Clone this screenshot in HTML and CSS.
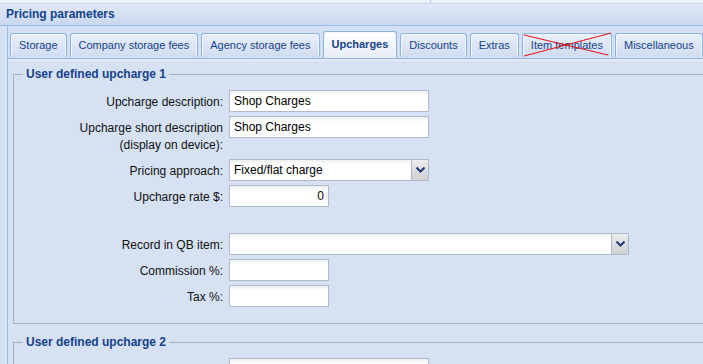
FILE: index.html
```html
<!DOCTYPE html>
<html lang="en">
<head>
  <meta charset="UTF-8" />
  <title>Pricing parameters</title>
  <link rel="stylesheet" href="styles.css">
</head>
<body>
  <div class="panel">
    <div class="top-strip"><span class="top-divider"></span></div>
    <div class="panel-header">Pricing parameters</div>

    <div class="panel-body">
      <ul class="tabs">
        <li class="tab">Storage</li>
        <li class="tab">Company storage fees</li>
        <li class="tab">Agency storage fees</li>
        <li class="tab active">Upcharges</li>
        <li class="tab">Discounts</li>
        <li class="tab">Extras</li>
        <li class="tab crossed">Item templates
          <svg class="cross" viewBox="0 0 94 24" preserveAspectRatio="none">
            <line x1="1" y1="1" x2="91" y2="22" />
            <line x1="1" y1="23" x2="94" y2="-1" />
          </svg>
        </li>
        <li class="tab">Miscellaneous</li>
      </ul>

      <div class="tab-body">
        <fieldset class="group">
          <legend>User defined upcharge 1</legend>
          <div class="form-row">
            <label>Upcharge description:</label>
            <div class="field wide">Shop Charges</div>
          </div>
          <div class="form-row">
            <label>Upcharge short description<br>(display on device):</label>
            <div class="field wide">Shop Charges</div>
          </div>
          <div class="form-row">
            <label>Pricing approach:</label>
            <div class="field wide combo">Fixed/flat charge<span class="trigger"><svg viewBox="0 0 9 6"><path d="M0.5 0.5 L4.5 4.5 L8.5 0.5" /></svg></span></div>
          </div>
          <div class="form-row">
            <label>Upcharge rate $:</label>
            <div class="field short number">0</div>
          </div>
          <div class="spacer"></div>
          <div class="form-row">
            <label>Record in QB item:</label>
            <div class="field huge combo"><span class="trigger"><svg viewBox="0 0 9 6"><path d="M0.5 0.5 L4.5 4.5 L8.5 0.5" /></svg></span></div>
          </div>
          <div class="form-row">
            <label>Commission %:</label>
            <div class="field short"></div>
          </div>
          <div class="form-row">
            <label>Tax %:</label>
            <div class="field short"></div>
          </div>
        </fieldset>

        <fieldset class="group">
          <legend>User defined upcharge 2</legend>
          <div class="form-row">
            <label>Upcharge description:</label>
            <div class="field wide"></div>
          </div>
        </fieldset>
      </div>
    </div>
  </div>
</body>
</html>
```

FILE: styles.css
```css
body {
  margin: 0;
  background-color: #d6e1f3;
  font-family: "Liberation Sans", Arial, sans-serif;
  font-size: 12px;
  overflow: hidden;
}

.panel {
  width: 780px;
}

.top-strip {
  height: 3px;
  background-color: #edf1f9;
  border-bottom: 1px solid #c6d5ee;
  position: relative;
}

.top-divider {
  position: absolute;
  left: 430px;
  top: 0;
  width: 1px;
  height: 3px;
  background-color: #b9c8e2;
}

.panel-header {
  height: 21px;
  line-height: 21px;
  padding-left: 6px;
  font-weight: bold;
  color: #15428b;
  background: linear-gradient(to bottom, #dfe8f6, #c9d8f0);
  border-bottom: 1px solid #99bbe8;
}

.panel-body {
  margin-left: 7px;
  border-left: 1px solid #99bbe8;
}

.tabs {
  list-style: none;
  margin: 0;
  padding: 6px 0 0 2px;
  display: flex;
  gap: 3px;
  height: 26px;
  border-bottom: 1px solid #8db2e3;
  background-color: #d3dff2;
}

.tab {
  position: relative;
  height: 23px;
  margin-top: 1px;
  padding: 0 8px;
  line-height: 23px;
  font-size: 11px;
  color: #15428b;
  border: 1px solid #8db2e3;
  border-bottom: none;
  border-radius: 3px 3px 0 0;
  box-shadow: inset 1px 1px 0 #f3f7fd, inset -1px 0 0 #f3f7fd;
  background: linear-gradient(to bottom, #e8effa, #cfdcf1);
  white-space: nowrap;
}

.tab.active {
  height: 26px;
  margin-top: -1px;
  margin-bottom: -1px;
  line-height: 25px;
  font-weight: bold;
  background: linear-gradient(to bottom, #ffffff, #e6edf9);
}

.cross {
  position: absolute;
  left: 0;
  top: 0;
  width: 100%;
  height: 100%;
  overflow: visible;
}

.cross line {
  stroke: #ee0000;
  stroke-width: 1;
}

.tab-body {
  border-top: 2px solid #e4ebf7;
  padding: 6px 0 0 5px;
}

.group {
  margin: 0 0 11px 0;
  padding: 9px 0 12px 0;
  border: 1px solid #a9b0c4;
}

.group legend {
  margin-left: 9px;
  padding: 0 3px;
  font-weight: bold;
  color: #15428b;
}

.form-row {
  display: flex;
  align-items: flex-start;
  margin-bottom: 4px;
}

.form-row label {
  width: 209px;
  padding: 4px 6px 1px 0;
  line-height: 17px;
  text-align: right;
  color: #111;
}

.field {
  position: relative;
  box-sizing: border-box;
  height: 22px;
  padding: 0 4px;
  line-height: 20px;
  font-size: 12px;
  color: #000;
  border: 1px solid #b3b8cb;
  background: linear-gradient(to bottom, #eef1f1, #ffffff 5px);
}

.field.wide {
  width: 200px;
}

.field.huge {
  width: 400px;
}

.field.short {
  width: 100px;
}

.field.number {
  text-align: right;
}

.trigger {
  position: absolute;
  right: 0;
  top: 0;
  width: 16px;
  height: 20px;
  border-left: 1px solid #b3b8cb;
  background: linear-gradient(to bottom, #ececec, #cfd0d3);
  display: flex;
  align-items: center;
  justify-content: center;
}

.trigger svg {
  width: 9px;
  height: 6px;
}

.trigger path {
  fill: none;
  stroke: #1f3a78;
  stroke-width: 2;
}

.spacer {
  height: 22px;
}
```
